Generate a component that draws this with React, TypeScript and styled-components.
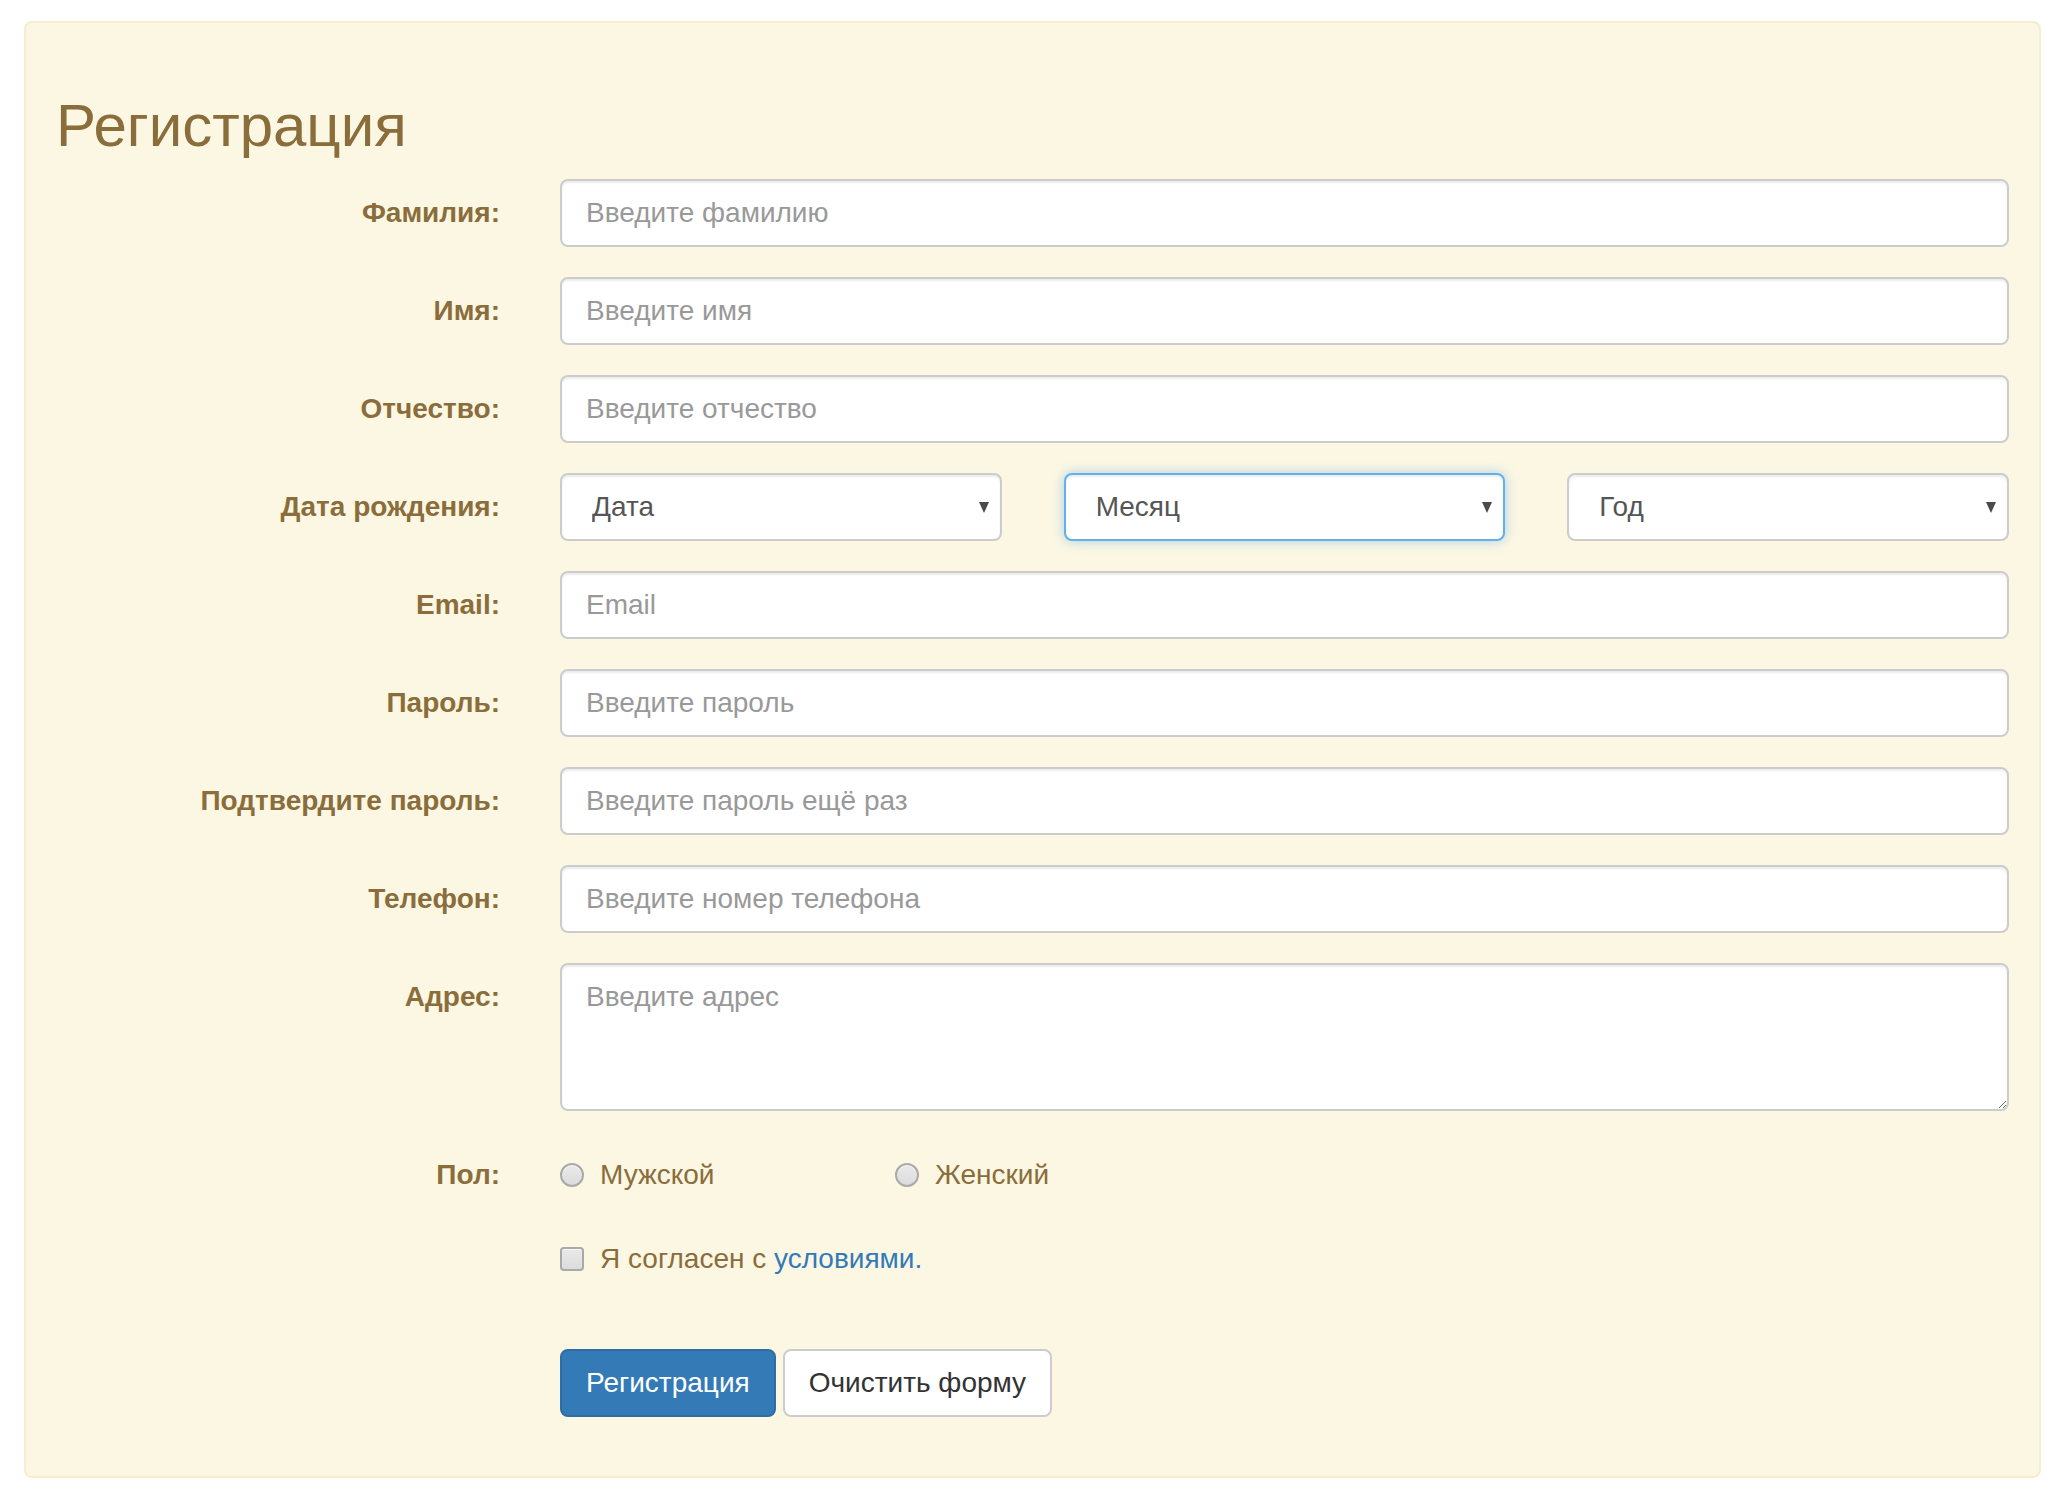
import React from "react";
import styled, { createGlobalStyle, css } from "styled-components";

const GlobalStyle = createGlobalStyle`
  html, body {
    margin: 0;
    padding: 0;
    background: #ffffff;
  }
  body {
    font-family: "Liberation Sans", Arial, Helvetica, sans-serif;
    font-size: 28px;
    line-height: 40px;
    color: #333333;
  }
  * { box-sizing: border-box; }
`;

const Panel = styled.div`
  width: 2017px;
  margin: 21px 0 0 24px;
  padding: 30px 30px 59px 22px;
  background: #fbf7e3;
  border: 2px solid #f8ecce;
  border-radius: 8px;
  color: #8a6d3b;
`;

const Title = styled.h2`
  margin: 40px 0 20px 0;
  padding-left: 8px;
  font-family: "Liberation Sans", Arial, sans-serif;
  font-size: 60px;
  font-weight: 400;
  line-height: 66px;
  color: #8a6d3b;
`;

const Form = styled.form`
  display: flex;
  flex-direction: column;
`;

const Row = styled.div<{ $gap?: number }>`
  display: grid;
  grid-template-columns: 452px 1fr;
  column-gap: 60px;
  margin-bottom: ${(p) => (p.$gap ?? 30)}px;
`;

const Label = styled.label`
  padding-top: 14px;
  font-size: 28px;
  line-height: 40px;
  font-weight: 700;
  text-align: right;
  color: #8a6d3b;
  white-space: nowrap;
`;

const fieldBase = css`
  display: block;
  width: 100%;
  padding: 12px 24px;
  font-family: "Liberation Sans", Arial, sans-serif;
  font-size: 28px;
  line-height: 40px;
  color: #555555;
  background: #ffffff;
  border: 2px solid #cccccc;
  border-radius: 8px;
  box-shadow: inset 0 2px 2px rgba(0, 0, 0, 0.075);
  outline: none;
  &::placeholder {
    color: #999999;
    opacity: 1;
  }
`;

const Input = styled.input`
  ${fieldBase};
  height: 68px;
`;

const TextArea = styled.textarea`
  ${fieldBase};
  height: 148px;
  resize: vertical;
`;

const DateGrid = styled.div`
  display: grid;
  grid-template-columns: repeat(3, 1fr);
  column-gap: 62px;
`;

const SelectBox = styled.div`
  position: relative;
  &::after {
    content: "";
    position: absolute;
    right: 13px;
    top: 29px;
    border-left: 5px solid transparent;
    border-right: 5px solid transparent;
    border-top: 11px solid #4a4a4a;
    pointer-events: none;
  }
`;

const Select = styled.select<{ $focused?: boolean }>`
  ${fieldBase};
  height: 68px;
  padding-left: 30px;
  appearance: none;
  -webkit-appearance: none;
  ${(p) =>
    p.$focused &&
    css`
      border-color: #66afe9;
      box-shadow: inset 0 2px 2px rgba(0, 0, 0, 0.075),
        0 0 12px rgba(102, 175, 233, 0.55);
    `}
`;

const ChoiceLine = styled.div`
  display: grid;
  grid-template-columns: 335px auto;
  padding-top: 14px;
  justify-content: start;
`;

const Choice = styled.label`
  display: flex;
  align-items: center;
  gap: 16px;
  font-size: 28px;
  line-height: 40px;
  color: #8a6d3b;
  white-space: nowrap;
`;

const markBase = css`
  appearance: none;
  -webkit-appearance: none;
  margin: 0;
  width: 24px;
  height: 24px;
  flex: none;
  border: 2px solid #a9a9a9;
  background: linear-gradient(#e9e9e9, #dcdcdc);
  box-shadow: inset 0 1px 1px rgba(255, 255, 255, 0.8);
`;

const Radio = styled.input`
  ${markBase};
  border-radius: 50%;
`;

const Check = styled.input`
  ${markBase};
  border-radius: 4px;
`;

const TermsLink = styled.a`
  color: #337ab7;
  text-decoration: none;
`;

const Buttons = styled.div`
  display: flex;
  gap: 7px;
`;

const Button = styled.button<{ $primary?: boolean }>`
  height: 68px;
  padding: 12px 24px;
  font-family: "Liberation Sans", Arial, sans-serif;
  font-size: 28px;
  line-height: 40px;
  border-radius: 8px;
  border: 2px solid ${(p) => (p.$primary ? "#2e6da4" : "#cccccc")};
  background: ${(p) => (p.$primary ? "#337ab7" : "#ffffff")};
  color: ${(p) => (p.$primary ? "#ffffff" : "#333333")};
  cursor: pointer;
`;

const Spacer = styled.div``;

type Field = { label: string; placeholder: string; type?: string };

const topFields: Field[] = [
  { label: "Фамилия:", placeholder: "Введите фамилию" },
  { label: "Имя:", placeholder: "Введите имя" },
  { label: "Отчество:", placeholder: "Введите отчество" },
];

const bottomFields: Field[] = [
  { label: "Email:", placeholder: "Email", type: "email" },
  { label: "Пароль:", placeholder: "Введите пароль", type: "password" },
  { label: "Подтвердите пароль:", placeholder: "Введите пароль ещё раз", type: "password" },
  { label: "Телефон:", placeholder: "Введите номер телефона", type: "tel" },
];

const dateParts = [
  { name: "Дата", focused: false },
  { name: "Месяц", focused: true },
  { name: "Год", focused: false },
];

function TextRow({ label, placeholder, type }: Field) {
  return (
    <Row>
      <Label>{label}</Label>
      <Input type={type ?? "text"} placeholder={placeholder} />
    </Row>
  );
}

export default function App() {
  return (
    <>
      <GlobalStyle />
      <Panel>
        <Title>Регистрация</Title>
        <Form onSubmit={(e) => e.preventDefault()}>
          {topFields.map((f) => (
            <TextRow key={f.label} {...f} />
          ))}
          <Row>
            <Label>Дата рождения:</Label>
            <DateGrid>
              {dateParts.map((d) => (
                <SelectBox key={d.name}>
                  <Select defaultValue="" $focused={d.focused}>
                    <option value="">{d.name}</option>
                  </Select>
                </SelectBox>
              ))}
            </DateGrid>
          </Row>
          {bottomFields.map((f) => (
            <TextRow key={f.label} {...f} />
          ))}
          <Row>
            <Label>Адрес:</Label>
            <TextArea placeholder="Введите адрес" rows={3} />
          </Row>
          <Row>
            <Label>Пол:</Label>
            <ChoiceLine>
              <Choice>
                <Radio type="radio" name="sex" />
                Мужской
              </Choice>
              <Choice>
                <Radio type="radio" name="sex" />
                Женский
              </Choice>
            </ChoiceLine>
          </Row>
          <Row $gap={70}>
            <Spacer />
            <ChoiceLine>
              <Choice>
                <Check type="checkbox" />
                <span>
                  Я согласен с <TermsLink href="#">условиями.</TermsLink>
                </span>
              </Choice>
            </ChoiceLine>
          </Row>
          <Row $gap={0}>
            <Spacer />
            <Buttons>
              <Button type="submit" $primary>
                Регистрация
              </Button>
              <Button type="reset">Очистить форму</Button>
            </Buttons>
          </Row>
        </Form>
      </Panel>
    </>
  );
}
